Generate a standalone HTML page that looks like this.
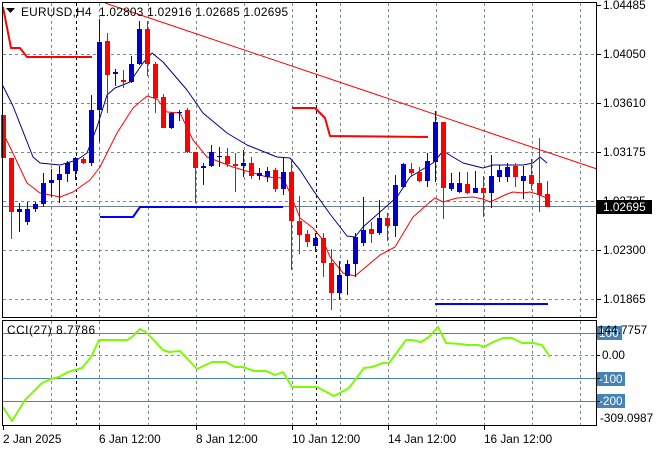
<!DOCTYPE html>
<html><head><meta charset="utf-8"><style>
html,body{margin:0;padding:0;background:#fff;width:660px;height:450px;overflow:hidden}
svg{display:block;font-family:"Liberation Sans",sans-serif;font-size:11.8px}
</style></head><body>
<svg id="s" width="660" height="450" xmlns="http://www.w3.org/2000/svg">
<rect width="660" height="450" fill="#fff"/>
<g id="grid" stroke="#7d8896" stroke-dasharray="3,3" stroke-width="1"></g>
<g id="lines" fill="none"></g>
<g id="cdl"></g>
<rect x="2.5" y="2.5" width="594" height="315" fill="none" stroke="#000"/>
<rect x="2.5" y="320.5" width="594" height="105" fill="none" stroke="#000"/>
<path d="M6 8 L15 8 L10.5 13 Z" fill="#000"/>
<text x="21" y="16" fill="#000" textLength="267" lengthAdjust="spacing">EURUSD,H4&#160; 1.02803 1.02916 1.02685 1.02695</text>
<text x="7" y="334" fill="#000" textLength="88" lengthAdjust="spacing">CCI(27) 8.7786</text>
<g id="axis" fill="#000"></g>
</svg>
<script>
var NS="http://www.w3.org/2000/svg";
function el(p,t,a){var e=document.createElementNS(NS,t);for(var k in a)e.setAttribute(k,a[k]);p.appendChild(e);return e;}
var g=document.getElementById('grid'),L=document.getElementById('lines'),C=document.getElementById('cdl'),A=document.getElementById('axis');
var xs=[51,99,148,196,244,292,340,388,436,484,532,580];
xs.forEach(function(x){el(g,'line',{x1:x+.5,y1:3,x2:x+.5,y2:317});el(g,'line',{x1:x+.5,y1:321,x2:x+.5,y2:425});});
[76,316].forEach(function(x){el(g,'line',{x1:x+.5,y1:3,x2:x+.5,y2:317,stroke:'#000'});el(g,'line',{x1:x+.5,y1:321,x2:x+.5,y2:425,stroke:'#000'});});
[54,103,152,201,250,299].forEach(function(y){el(g,'line',{x1:3,y1:y+.5,x2:596,y2:y+.5});});
el(g,'line',{x1:3,y1:355.5,x2:596,y2:355.5});
[333,378,401].forEach(function(y){el(L,'line',{x1:3,y1:y+.5,x2:596,y2:y+.5,stroke:'#4682b4'});});
el(L,'line',{x1:3,y1:206.5,x2:596,y2:206.5,stroke:'#708090'});
function pl(pts,col,w){el(L,'polyline',{points:pts,stroke:col,'stroke-width':w,fill:'none','stroke-linejoin':'round'});}
pl("105,3 597,169","#ff0000",1);
pl("3,7 11,48 20,48 27,57 92,57","#ff0000",2);
pl("292,108 315,108 325,118 330,136 428,137","#ff0000",2);
pl("100,217 133,217 140,207 283,207","#0000ff",2);
pl("435,304 548,304","#0000ff",2);
pl("3,86 13,106 33,157 40,163 60,165 77,160 87,153 97,127 107,95 115,88 130,82 143,63 152,53 163,62 187,90 203,113 227,133 247,145 267,153 277,157 290,158 300,170 313,190 320,200 330,214 347,236 355,237 363,227 397,197 410,177 433,163 443,151 463,163 483,168 493,165 523,165 533,163 540,157 547,163","#00008b",1);
pl("3,133 10,147 27,183 40,193 60,197 73,192 90,180 100,167 117,133 133,108 147,96 157,99 167,112 180,113 193,140 207,157 233,167 267,177 283,178 290,193 300,218 313,228 323,240 330,257 343,273 355,276 380,255 395,247 413,217 430,202 435,198 443,202 457,198 473,197 483,199 490,202 507,194 513,192 523,193 530,192 537,194 547,198","#ff0000",1);
pl("3,407 12,421 25,400 42,383 51,379 59,377 68,372 82,368 91,357 99,340 127,340 132,337 140,329 146,332 163,350 169,352 180,351 197,369 212,362 226,362 235,367 243,367 254,371 266,371 275,375 283,372 292,387 300,387 317,387 334,396 349,388 364,368 372,367 383,363 389,363 406,340 412,340 421,342 429,337 438,327 446,343 461,344 467,345 478,345 484,347 493,342 503,338 512,338 522,343 533,343 542,345 550,357","#7cfc00",2);
var d=[[115,158,115,158,'r'],[158,212,158,239,'r'],[209,212,203,232,'b'],[209,222,202,225,'b'],[204,209,202,212,'b'],[183,204,173,207,'b'],[180,183,169,197,'b'],[174,180,166,203,'b'],[163,174,161,182,'b'],[158,171,157,180,'b'],[159,163,157,164,'r'],[110,163,95,166,'b'],[42,110,19,142,'b'],[41,75,33,113,'r'],[72,74,69,86,'b'],[80,82,70,88,'r'],[64,82,56,83,'b'],[29,64,21,65,'b'],[29,64,21,76,'r'],[64,98,62,113,'r'],[97,128,94,128,'r'],[113,128,112,129,'b'],[112,113,110,121,'b'],[110,152,108,153,'r'],[152,168,152,203,'r'],[166,168,163,185,'b'],[152,166,145,167,'b'],[156,157,147,167,'b'],[156,164,148,167,'r'],[164,166,153,192,'r'],[163,166,150,177,'b'],[163,176,157,179,'r'],[173,176,168,180,'b'],[171,177,167,182,'b'],[170,189,168,192,'r'],[172,189,158,195,'b'],[172,221,160,270,'r'],[221,235,196,254,'r'],[234,242,230,247,'r'],[238,246,233,252,'b'],[238,263,233,277,'r'],[263,293,249,310,'r'],[275,293,261,300,'b'],[264,276,260,295,'b'],[237,264,233,277,'b'],[230,243,197,246,'b'],[229,234,222,243,'r'],[218,233,200,235,'b'],[218,226,213,241,'r'],[185,226,175,237,'b'],[164,187,163,188,'b'],[169,173,163,176,'r'],[172,181,167,182,'r'],[161,181,153,187,'b'],[122,162,111,182,'b'],[122,188,122,219,'r'],[183,189,173,191,'b'],[183,192,172,193,'b'],[184,193,172,194,'r'],[188,193,171,193,'b'],[188,193,176,217,'r'],[176,193,155,208,'b'],[170,177,165,182,'b'],[167,177,163,182,'b'],[166,177,163,187,'r'],[176,181,166,199,'b'],[175,184,159,190,'r'],[183,195,138,212,'r'],[194,207,181,207,'r']];
d.forEach(function(c,k){var x=3+8*k;var col=c[4]=='r'?'#ff0000':'#0000cd';
el(C,'line',{x1:x+.5,y1:c[2],x2:x+.5,y2:c[3],stroke:col});
var h=Math.max(1,c[1]-c[0]);el(C,'rect',{x:x-2,y:c[0],width:5,height:h,fill:col});});
[[5,'1.04485'],[54,'1.04050'],[103,'1.03610'],[152,'1.03175'],[201,'1.02735'],[250,'1.02300'],[299,'1.01865']].forEach(function(p){
el(A,'line',{x1:597,y1:p[0]+.5,x2:601,y2:p[0]+.5,stroke:'#000'});var t=el(A,'text',{x:603,y:p[0]+4});t.textContent=p[1];});
el(A,'rect',{x:597,y:200,width:55,height:14,fill:'#000'});
var t=el(A,'text',{x:603,y:211,fill:'#fff'});t.textContent='1.02695';
el(A,'rect',{x:597,y:326,width:25,height:14,fill:'#4682b4'});
t=el(A,'text',{x:599,y:337,fill:'#fff'});t.textContent='100';
t=el(A,'text',{x:598,y:334});t.textContent='144.7757';
t=el(A,'text',{x:602,y:359});t.textContent='0.00';
el(A,'rect',{x:597,y:372,width:28,height:14,fill:'#4682b4'});
t=el(A,'text',{x:599,y:383,fill:'#fff'});t.textContent='-100';
el(A,'rect',{x:597,y:394,width:28,height:14,fill:'#4682b4'});
t=el(A,'text',{x:599,y:405,fill:'#fff'});t.textContent='-200';
t=el(A,'text',{x:600,y:422});t.textContent='-309.0987';
[333,355,378,401].forEach(function(y){el(A,'line',{x1:597,y1:y+.5,x2:600,y2:y+.5,stroke:'#000'});});
[[3,'2 Jan 2025'],[99,'6 Jan 12:00'],[196,'8 Jan 12:00'],[292,'10 Jan 12:00'],[388,'14 Jan 12:00'],[484,'16 Jan 12:00']].forEach(function(p){
el(A,'line',{x1:p[0]+.5,y1:426,x2:p[0]+.5,y2:430,stroke:'#000'});var t=el(A,'text',{x:p[0],y:443});t.textContent=p[1];});
</script>
</body></html>
